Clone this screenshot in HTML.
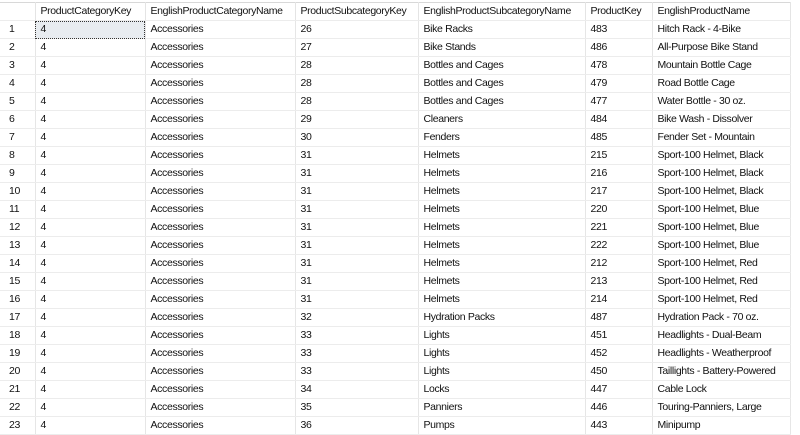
<!DOCTYPE html>
<html><head><style>
body{margin:0;background:#fff;width:800px;height:425px;overflow:hidden;font-family:"Liberation Sans",Arial,sans-serif;font-size:10.5px;letter-spacing:-0.35px;color:#111}
table{border-collapse:collapse;table-layout:fixed;position:absolute;left:0;top:2px;width:790px}
td,th{height:17px;padding:0 0 0 5px;border-right:1px solid #e6e6e6;border-bottom:1px solid #ececec;white-space:nowrap;overflow:hidden;text-align:left;font-weight:normal;line-height:17px}
th{border-top:1px solid #d8d8d8;border-right:1px solid #e4e4e4;background:#fff}
td:first-child{padding-left:9px;border-right:1px solid #e6e6e6}
tr.s td:nth-child(2){background:#e8ecf0;outline:1px dotted #333;outline-offset:-1px}
</style></head><body>
<table>
<colgroup><col style="width:35px"><col style="width:110px"><col style="width:150px"><col style="width:123px"><col style="width:167px"><col style="width:67px"><col style="width:138px"></colgroup>
<tr><th></th><th>ProductCategoryKey</th><th>EnglishProductCategoryName</th><th>ProductSubcategoryKey</th><th>EnglishProductSubcategoryName</th><th>ProductKey</th><th>EnglishProductName</th></tr>
<tr class="s"><td>1</td><td>4</td><td>Accessories</td><td>26</td><td>Bike Racks</td><td>483</td><td>Hitch Rack - 4-Bike</td></tr>
<tr><td>2</td><td>4</td><td>Accessories</td><td>27</td><td>Bike Stands</td><td>486</td><td>All-Purpose Bike Stand</td></tr>
<tr><td>3</td><td>4</td><td>Accessories</td><td>28</td><td>Bottles and Cages</td><td>478</td><td>Mountain Bottle Cage</td></tr>
<tr><td>4</td><td>4</td><td>Accessories</td><td>28</td><td>Bottles and Cages</td><td>479</td><td>Road Bottle Cage</td></tr>
<tr><td>5</td><td>4</td><td>Accessories</td><td>28</td><td>Bottles and Cages</td><td>477</td><td>Water Bottle - 30 oz.</td></tr>
<tr><td>6</td><td>4</td><td>Accessories</td><td>29</td><td>Cleaners</td><td>484</td><td>Bike Wash - Dissolver</td></tr>
<tr><td>7</td><td>4</td><td>Accessories</td><td>30</td><td>Fenders</td><td>485</td><td>Fender Set - Mountain</td></tr>
<tr><td>8</td><td>4</td><td>Accessories</td><td>31</td><td>Helmets</td><td>215</td><td>Sport-100 Helmet, Black</td></tr>
<tr><td>9</td><td>4</td><td>Accessories</td><td>31</td><td>Helmets</td><td>216</td><td>Sport-100 Helmet, Black</td></tr>
<tr><td>10</td><td>4</td><td>Accessories</td><td>31</td><td>Helmets</td><td>217</td><td>Sport-100 Helmet, Black</td></tr>
<tr><td>11</td><td>4</td><td>Accessories</td><td>31</td><td>Helmets</td><td>220</td><td>Sport-100 Helmet, Blue</td></tr>
<tr><td>12</td><td>4</td><td>Accessories</td><td>31</td><td>Helmets</td><td>221</td><td>Sport-100 Helmet, Blue</td></tr>
<tr><td>13</td><td>4</td><td>Accessories</td><td>31</td><td>Helmets</td><td>222</td><td>Sport-100 Helmet, Blue</td></tr>
<tr><td>14</td><td>4</td><td>Accessories</td><td>31</td><td>Helmets</td><td>212</td><td>Sport-100 Helmet, Red</td></tr>
<tr><td>15</td><td>4</td><td>Accessories</td><td>31</td><td>Helmets</td><td>213</td><td>Sport-100 Helmet, Red</td></tr>
<tr><td>16</td><td>4</td><td>Accessories</td><td>31</td><td>Helmets</td><td>214</td><td>Sport-100 Helmet, Red</td></tr>
<tr><td>17</td><td>4</td><td>Accessories</td><td>32</td><td>Hydration Packs</td><td>487</td><td>Hydration Pack - 70 oz.</td></tr>
<tr><td>18</td><td>4</td><td>Accessories</td><td>33</td><td>Lights</td><td>451</td><td>Headlights - Dual-Beam</td></tr>
<tr><td>19</td><td>4</td><td>Accessories</td><td>33</td><td>Lights</td><td>452</td><td>Headlights - Weatherproof</td></tr>
<tr><td>20</td><td>4</td><td>Accessories</td><td>33</td><td>Lights</td><td>450</td><td>Taillights - Battery-Powered</td></tr>
<tr><td>21</td><td>4</td><td>Accessories</td><td>34</td><td>Locks</td><td>447</td><td>Cable Lock</td></tr>
<tr><td>22</td><td>4</td><td>Accessories</td><td>35</td><td>Panniers</td><td>446</td><td>Touring-Panniers, Large</td></tr>
<tr><td>23</td><td>4</td><td>Accessories</td><td>36</td><td>Pumps</td><td>443</td><td>Minipump</td></tr>
</table>
</body></html>
